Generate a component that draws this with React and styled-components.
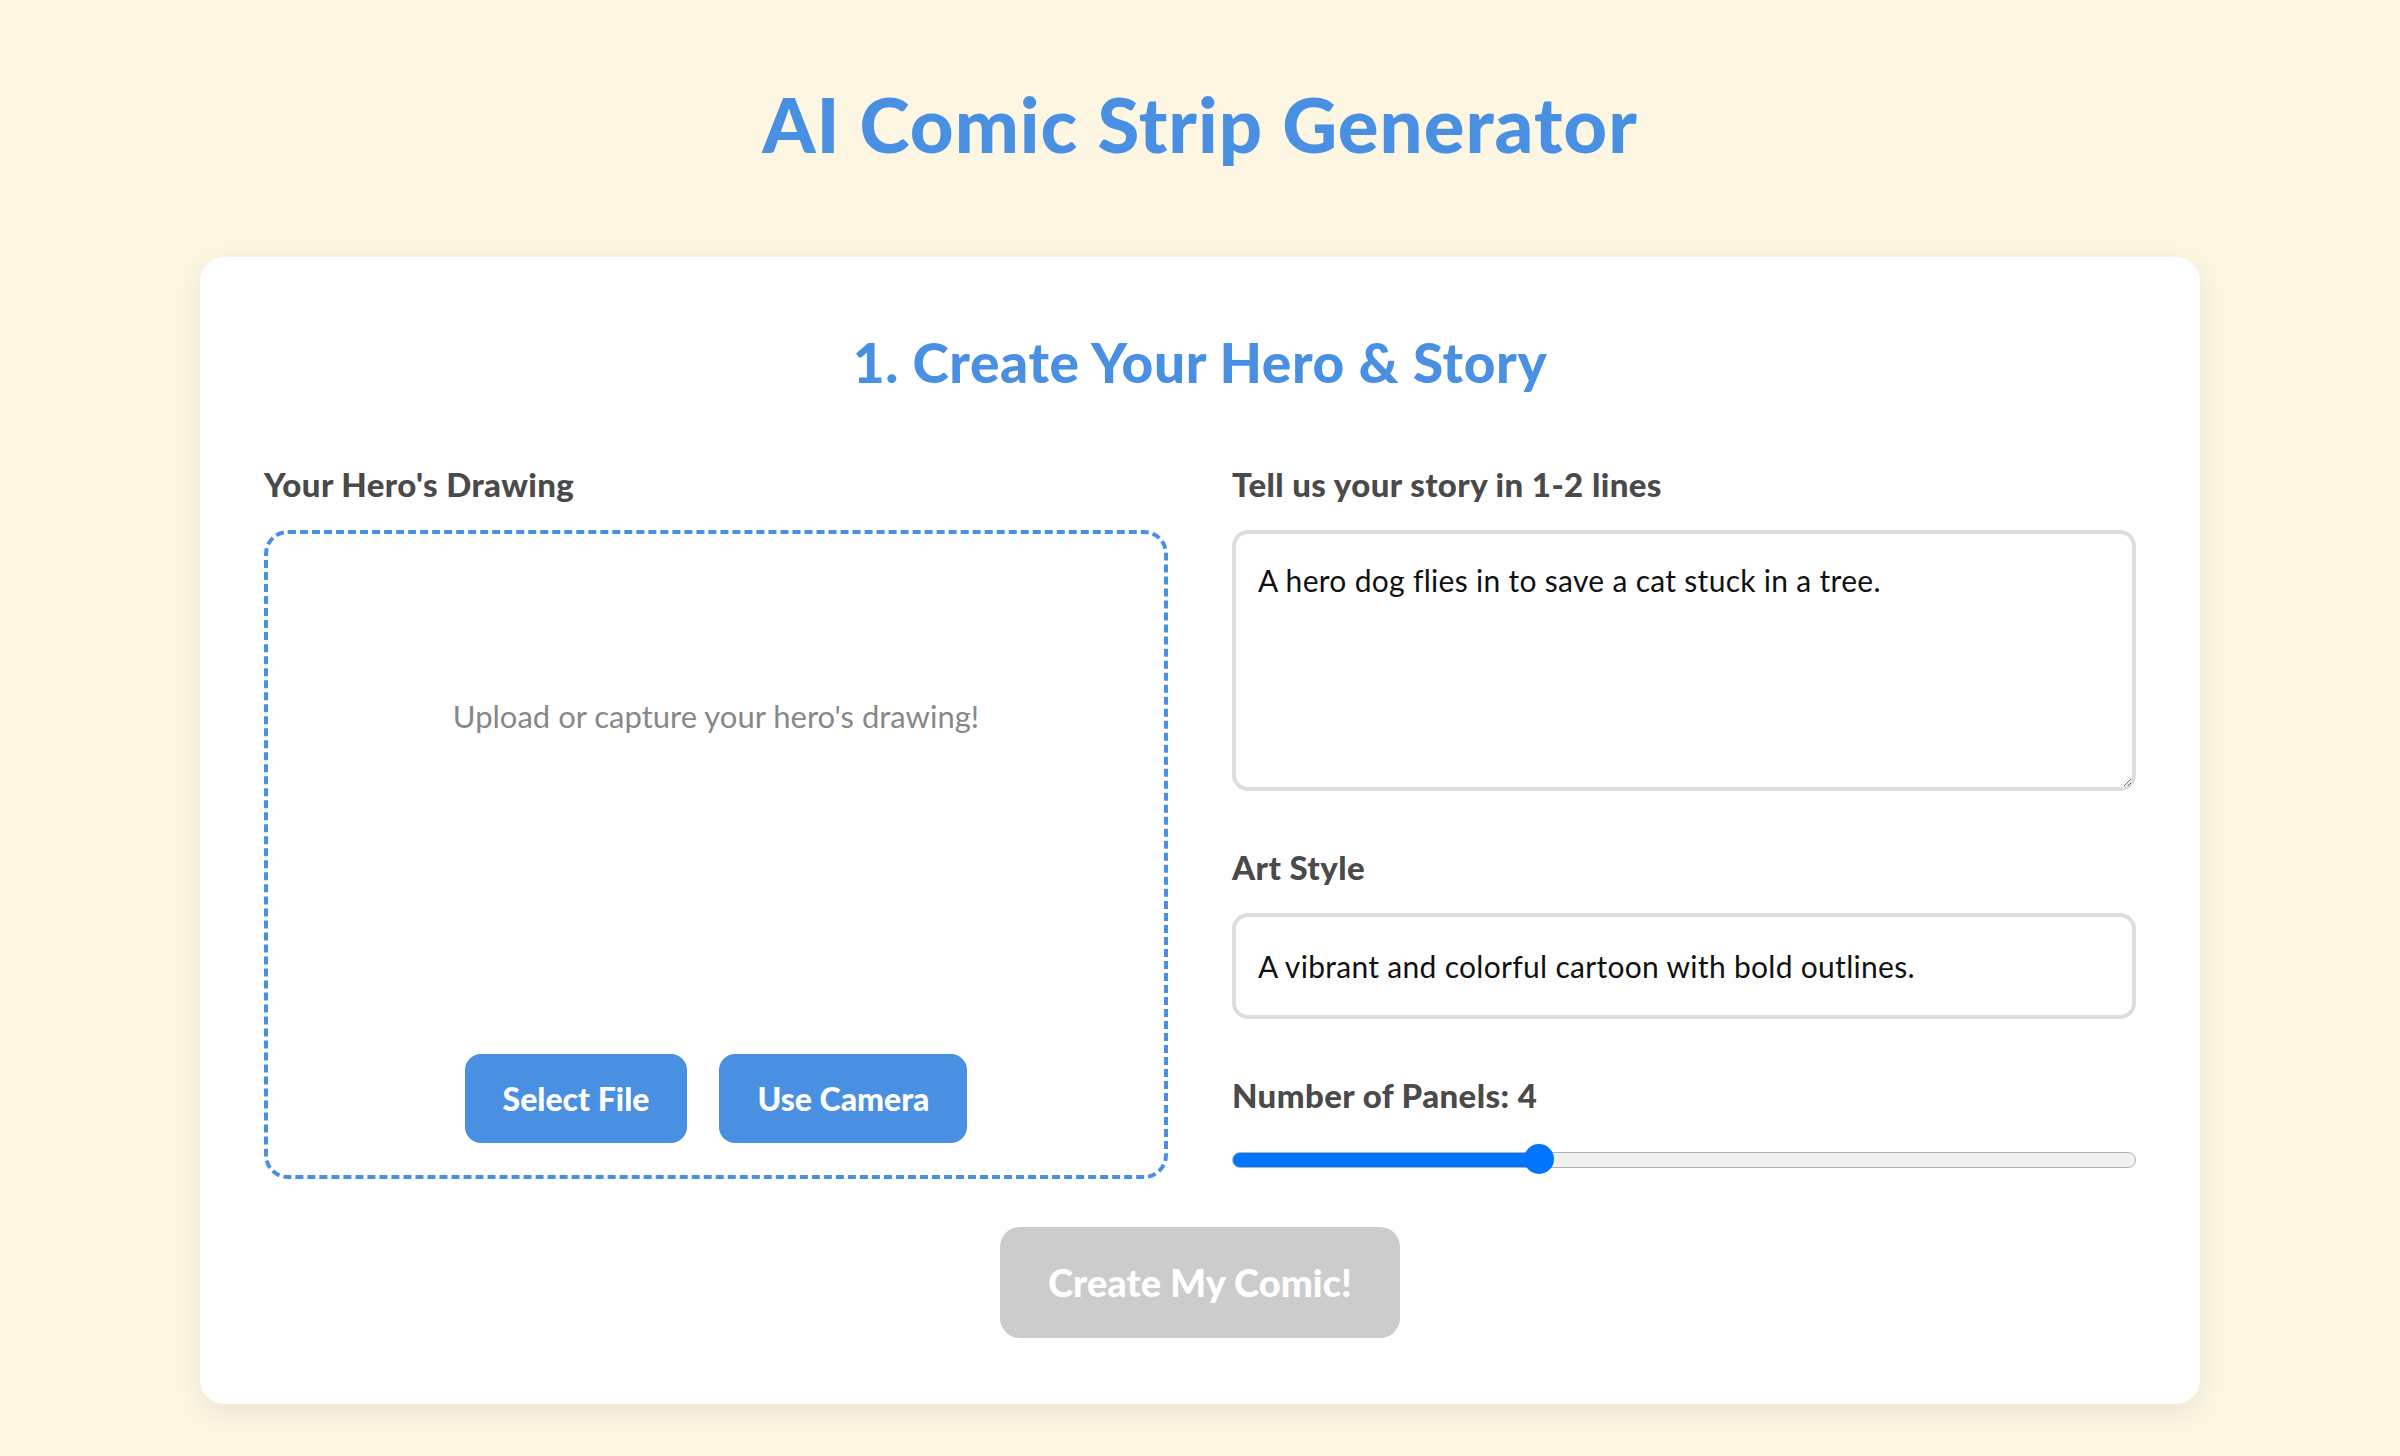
import React, { useState } from 'react'
import styled, { createGlobalStyle } from 'styled-components'

const GlobalStyle = createGlobalStyle`
  * { box-sizing: border-box; }
  body {
    margin: 0;
    background: #fdf6e3;
    font-family: Lato, "Noto Sans", sans-serif;
  }
`;

const Page = styled.div`
  min-height: 1456px;
  padding: 78px 200px 40px;
  display: flex;
  flex-direction: column;
  align-items: center;
`;

const Title = styled.h1`
  margin: 0 0 88px;
  font-size: 76px;
  line-height: 1.2;
  font-weight: 900;
  color: #4a90e2;
  letter-spacing: 1px;
`;

const Card = styled.section`
  width: 2000px;
  background: #fff;
  border-radius: 24px;
  box-shadow: 0 8px 30px rgba(0, 0, 0, 0.08);
  padding: 70px 64px 66px;
  display: flex;
  flex-direction: column;
  align-items: center;
`;

const Heading = styled.h2`
  margin: 0 0 63px;
  font-size: 55px;
  line-height: 1.3;
  font-weight: 900;
  color: #4a90e2;
  letter-spacing: 0.6px;
`;

const Columns = styled.div`
  width: 100%;
  display: grid;
  grid-template-columns: 1fr 1fr;
  gap: 64px;
`;

const Column = styled.div`
  display: flex;
  flex-direction: column;
`;

const Field = styled.div`
  display: flex;
  flex-direction: column;
  flex: ${p => (p.$grow ? 1 : 'none')};
  margin-bottom: ${p => (p.$last ? 0 : '54px')};
`;

const Label = styled.label`
  font-size: 33px;
  line-height: 44px;
  font-weight: 900;
  color: #4a4a4a;
  letter-spacing: 0.4px;
  margin-bottom: 24px;
`;

const DropZone = styled.div`
  flex: 1;
  border: 4px dashed #4a90e2;
  border-radius: 24px;
  padding: 32px;
  display: flex;
  flex-direction: column;
  align-items: center;
`;

const Placeholder = styled.div`
  min-height: 300px;
  display: flex;
  align-items: center;
  justify-content: center;
  font-size: 31px;
  color: #888;
`;

const ButtonRow = styled.div`
  margin-top: auto;
  display: flex;
  gap: 32px;
`;

const Button = styled.button`
  font-family: inherit;
  border: none;
  background: ${p => (p.$disabled ? '#cccccc' : '#4a90e2')};
  color: #fff;
  font-weight: 900;
  font-size: ${p => (p.$big ? '38px' : '32px')};
  line-height: ${p => (p.$big ? '47px' : '41px')};
  padding: ${p => (p.$big ? '32px 48px' : '24px 38px')};
  border-radius: ${p => (p.$big ? '20px' : '16px')};
  cursor: ${p => (p.$disabled ? 'not-allowed' : 'pointer')};
`;

const TextArea = styled.textarea`
  font-family: inherit;
  height: 261px;
  resize: vertical;
  border: 4px solid #dddddd;
  border-radius: 16px;
  padding: 24px 22px;
  font-size: 30px;
  line-height: 1.5;
  letter-spacing: 0.3px;
  color: #111;
  outline: none;
`;

const TextInput = styled.input`
  font-family: inherit;
  height: 106px;
  border: 4px solid #dddddd;
  border-radius: 16px;
  padding: 0 22px;
  font-size: 30px;
  letter-spacing: 0.3px;
  color: #111;
  outline: none;
`;

const Range = styled.input`
  -webkit-appearance: none;
  appearance: none;
  width: 100%;
  height: 30px;
  margin: 4px 0 4px;
  background: transparent;

  &::-webkit-slider-runnable-track {
    height: 16px;
    border-radius: 8px;
    border: 1.5px solid #b0b0b0;
    background: linear-gradient(to right, #0075ff 0, #0075ff ${p => p.$pct}%, #efefef ${p => p.$pct}%, #efefef 100%);
  }
  &::-webkit-slider-thumb {
    -webkit-appearance: none;
    width: 30px;
    height: 30px;
    margin-top: -8.5px;
    border-radius: 50%;
    background: #0075ff;
    border: none;
  }
`;

const Footer = styled.div`
  margin-top: 48px;
  display: flex;
  justify-content: center;
`;

export default function App() {
  const [story, setStory] = useState('A hero dog flies in to save a cat stuck in a tree.')
  const [style, setStyle] = useState('A vibrant and colorful cartoon with bold outlines.')
  const [panels, setPanels] = useState(4)
  const pct = ((panels - 1) / 9) * 100

  return (
    <>
      <GlobalStyle />
      <Page>
        <Title>AI Comic Strip Generator</Title>
        <Card>
          <Heading>1. Create Your Hero &amp; Story</Heading>
          <Columns>
            <Column>
              <Field $grow $last>
                <Label>Your Hero's Drawing</Label>
                <DropZone>
                  <Placeholder>Upload or capture your hero's drawing!</Placeholder>
                  <ButtonRow>
                    <Button>Select File</Button>
                    <Button>Use Camera</Button>
                  </ButtonRow>
                </DropZone>
              </Field>
            </Column>
            <Column>
              <Field>
                <Label>Tell us your story in 1-2 lines</Label>
                <TextArea value={story} onChange={e => setStory(e.target.value)} />
              </Field>
              <Field>
                <Label>Art Style</Label>
                <TextInput value={style} onChange={e => setStyle(e.target.value)} />
              </Field>
              <Field $last>
                <Label>Number of Panels: {panels}</Label>
                <Range
                  type="range"
                  min="1"
                  max="10"
                  value={panels}
                  $pct={pct}
                  onChange={e => setPanels(Number(e.target.value))}
                />
              </Field>
            </Column>
          </Columns>
          <Footer>
            <Button $big $disabled>Create My Comic!</Button>
          </Footer>
        </Card>
      </Page>
    </>
  )
}
